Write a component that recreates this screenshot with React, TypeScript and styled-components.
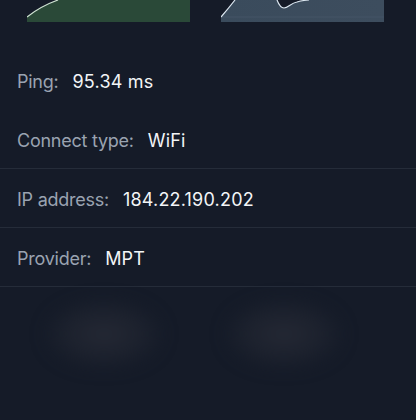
import React from "react";
import styled, { createGlobalStyle } from "styled-components";

const Global = createGlobalStyle`
  html, body { margin: 0; padding: 0; background: #151b28; }
  body { font-family: Inter, "Noto Sans", "Liberation Sans", sans-serif; -webkit-font-smoothing: antialiased; }
`;

const Page = styled.div`
  width: 416px;
  height: 420px;
  overflow: hidden;
  background: #151b28;
  display: flex;
  flex-direction: column;
`;

const Charts = styled.div`
  display: flex;
  gap: 31px;
  padding-left: 27px;
  height: 22px;
`;

const ChartBox = styled.div`
  width: 163px;
  height: 22px;
  overflow: hidden;
  svg { display: block; }
`;

const List = styled.div`
  margin-top: 29px;
  display: flex;
  flex-direction: column;
`;

const Row = styled.div<{ $line?: boolean }>`
  box-sizing: border-box;
  height: 59px;
  padding-top: 3px;
  display: flex;
  align-items: center;
  gap: 14px;
  padding-left: 17px;
  border-bottom: 1px solid ${(p) => (p.$line ? "#252c39" : "transparent")};
  font-size: 18px;
`;

const Label = styled.span`
  color: #9aa3b1;
  letter-spacing: -0.25px;
`;

const Value = styled.span`
  color: #f3f5f7;
  letter-spacing: 0.2px;
`;

const BlobRow = styled.div`
  display: flex;
  gap: 62px;
  padding-left: 45px;
  margin-top: 12px;
`;

const Blob = styled.div`
  width: 118px;
  height: 70px;
  border-radius: 35px;
  background: radial-gradient(ellipse at center, #242834 0%, #1d222e 45%, rgba(21, 27, 40, 0) 75%);
  filter: blur(8px);
`;

const rows = [
  { label: "Ping:", value: "95.34 ms", line: false },
  { label: "Connect type:", value: "WiFi", line: true },
  { label: "IP address:", value: "184.22.190.202", line: true },
  { label: "Provider:", value: "MPT", line: true },
];

export default function App() {
  return (
    <Page>
      <Global />
      <Charts>
        <ChartBox>
          <svg width="163" height="22" viewBox="0 0 163 22">
            <path d="M0 17 Q14 6 31 0 L163 0 L163 22 L0 22 Z" fill="#2a4938" />
            <path d="M0 17 Q14 6 31 0" fill="none" stroke="#cfe3d3" strokeWidth="1.2" />
          </svg>
        </ChartBox>
        <ChartBox>
          <svg width="163" height="22" viewBox="0 0 163 22">
            <defs>
              <linearGradient id="sg" x1="0" y1="0" x2="1" y2="0">
                <stop offset="0" stopColor="#3a4b5c" />
                <stop offset="1" stopColor="#3d4d5e" />
              </linearGradient>
            </defs>
            <path
              d="M0 17 Q7 9 14 0 L56 0 C58 5 60 8 63 8 C67 8 70 3 76 2 C80 1 84 0 88 0 L163 0 L163 22 L0 22 Z"
              fill="url(#sg)"
            />
            <line x1="1" y1="17" x2="163" y2="17" stroke="#455566" strokeWidth="1" />
            <path
              d="M0 17 Q7 9 14 0 M56 0 C58 5 60 8 63 8 C67 8 70 3 76 2 C80 1 84 0 88 0"
              fill="none"
              stroke="#dde8f2"
              strokeWidth="1.2"
            />
          </svg>
        </ChartBox>
      </Charts>
      <List>
        {rows.map((r) => (
          <Row key={r.label} $line={r.line}>
            <Label>{r.label}</Label>
            <Value>{r.value}</Value>
          </Row>
        ))}
      </List>
      <BlobRow>
        <Blob />
        <Blob />
      </BlobRow>
    </Page>
  );
}
